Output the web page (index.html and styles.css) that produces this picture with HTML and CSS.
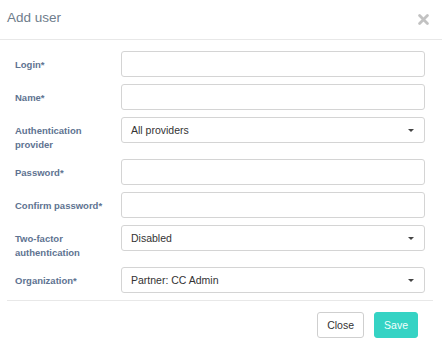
FILE: index.html
```html
<!DOCTYPE html>
<html>
<head>
<meta charset="utf-8">
<link rel="stylesheet" href="styles.css">
</head>
<body>
<div class="modal">
  <div class="modal-header">
    <h4 class="title">Add user</h4>
    <svg class="close-x" width="11" height="11" viewBox="0 0 11 11"><path d="M1.6 1.6 L9.4 9.4 M9.4 1.6 L1.6 9.4" stroke="#c2c2c2" stroke-width="2.8" stroke-linecap="round"/></svg>
  </div>
  <div class="modal-body">
    <div class="row"><label>Login*</label><div class="control"><input class="field" type="text"></div></div>
    <div class="row"><label>Name*</label><div class="control"><input class="field" type="text"></div></div>
    <div class="row"><label>Authentication provider</label><div class="control"><div class="field select">All providers<span class="caret"></span></div></div></div>
    <div class="row"><label>Password*</label><div class="control"><input class="field" type="password"></div></div>
    <div class="row"><label>Confirm password*</label><div class="control"><input class="field" type="password"></div></div>
    <div class="row"><label>Two-factor authentication</label><div class="control"><div class="field select">Disabled<span class="caret"></span></div></div></div>
    <div class="row last"><label>Organization*</label><div class="control"><div class="field select">Partner: CC Admin<span class="caret"></span></div></div></div>
  </div>
  <div class="modal-footer">
    <button class="btn btn-default">Close</button>
    <button class="btn btn-primary">Save</button>
  </div>
</div>
</body>
</html>
```
FILE: styles.css
```css
html, body {
  margin: 0;
  padding: 0;
  background: #fff;
  font-family: "Liberation Sans", Arial, Helvetica, sans-serif;
}
.modal {
  width: 442px;
}
.modal-header {
  height: 40px;
  box-sizing: border-box;
  border-bottom: 1px solid #e8e8e8;
  display: flex;
  align-items: center;
  justify-content: space-between;
  padding: 0 13px 5px 7px;
}
.title {
  margin: 0;
  font-weight: normal;
  font-size: 13.5px;
  color: #6f7d8c;
}
.close-x {
  display: block;
  margin-top: 4px;
}
.modal-body {
  padding: 11px 17px 0 15px;
}
.row {
  display: grid;
  grid-template-columns: 106px 1fr;
  margin-bottom: 7px;
}
.row label {
  font-size: 9.5px;
  font-weight: bold;
  color: #5e7391;
  line-height: 14px;
  padding: 7px 10px 0 0;
}
.field {
  display: block;
  box-sizing: border-box;
  width: 100%;
  height: 26px;
  margin: 0;
  border: 1px solid #d4d4d4;
  border-radius: 3px;
  background: #fff;
  font-family: inherit;
  font-size: 10.5px;
  color: #333;
  padding: 0 9px;
  outline: none;
}
.select {
  display: flex;
  align-items: center;
  justify-content: space-between;
  padding: 0 10px 0 9px;
}
.caret {
  width: 0;
  height: 0;
  border-left: 3px solid transparent;
  border-right: 3px solid transparent;
  border-top: 3px solid #444;
  margin-top: 1px;
}
.modal-footer {
  margin: 0 9px 0 7px;
  border-top: 1px solid #e8e8e8;
  padding: 11px 15px 12px 0;
  display: flex;
  justify-content: flex-end;
  gap: 10px;
}
.btn {
  height: 26px;
  box-sizing: border-box;
  border-radius: 3px;
  font-family: inherit;
  font-size: 10.5px;
  padding: 0 9px;
  margin: 0;
  cursor: pointer;
}
.btn-default {
  background: #fff;
  border: 1px solid #cfcfcf;
  color: #333;
}
.btn-primary {
  background: #35d3c4;
  border: 1px solid #35d3c4;
  color: #f2fffd;
}
```
